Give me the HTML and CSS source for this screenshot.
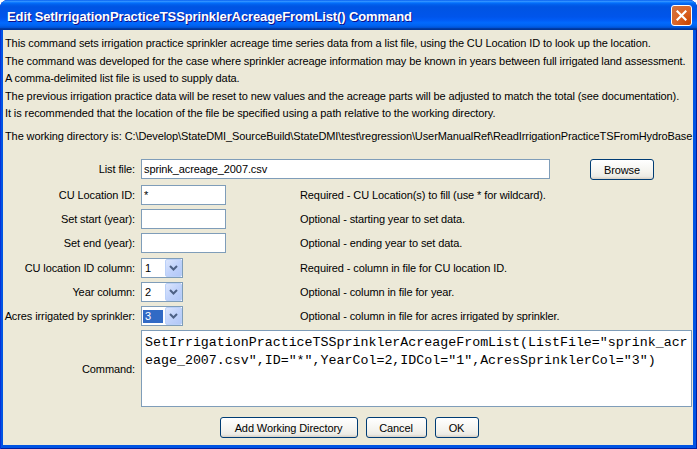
FILE: index.html
```html
<!DOCTYPE html>
<html>
<head>
<meta charset="utf-8">
<link rel="stylesheet" href="styles.css">
</head>
<body>
<div class="window">
  <div class="titlebar">
    <span class="title">Edit SetIrrigationPracticeTSSprinklerAcreageFromList() Command</span>
    <span class="close"><svg width="11" height="11" viewBox="0 0 11 11"><path d="M1.5 1.5 L9.5 9.5 M9.5 1.5 L1.5 9.5" stroke="#fff" stroke-width="2.2" stroke-linecap="square"/></svg></span>
  </div>
  <div class="client">
    <div class="desc">
      <div class="line">This command sets irrigation practice sprinkler acreage time series data from a list file, using the CU Location ID to look up the location.</div>
      <div class="line">The command was developed for the case where sprinkler acreage information may be known in years between full irrigated land assessment.</div>
      <div class="line">A comma-delimited list file is used to supply data.</div>
      <div class="line">The previous irrigation practice data will be reset to new values and the acreage parts will be adjusted to match the total (see documentation).</div>
      <div class="line">It is recommended that the location of the file be specified using a path relative to the working directory.</div>
      <div class="line workdir">The working directory is: C:\Develop\StateDMI_SourceBuild\StateDMI\test\regression\UserManualRef\ReadIrrigationPracticeTSFromHydroBase</div>
    </div>
    <div class="form">
      <div class="row row-file">
        <label class="lbl">List file:</label>
        <div class="filebox">
          <div class="field field-file">sprink_acreage_2007.csv</div>
          <div class="btn btn-browse">Browse</div>
        </div>
      </div>
      <div class="row spaced">
        <label class="lbl">CU Location ID:</label>
        <div class="field field-short">*</div>
        <div class="help">Required - CU Location(s) to fill (use * for wildcard).</div>
      </div>
      <div class="row">
        <label class="lbl">Set start (year):</label>
        <div class="field field-short"></div>
        <div class="help">Optional - starting year to set data.</div>
      </div>
      <div class="row">
        <label class="lbl">Set end (year):</label>
        <div class="field field-short"></div>
        <div class="help">Optional - ending year to set data.</div>
      </div>
      <div class="row spaced">
        <label class="lbl">CU location ID column:</label>
        <div class="combo"><span class="val">1</span><span class="arrow"><svg width="9" height="6" viewBox="0 0 9 6"><path d="M1 1 L4.5 4.5 L8 1" fill="none" stroke="#4d6185" stroke-width="2"/></svg></span></div>
        <div class="help">Required - column in file for CU location ID.</div>
      </div>
      <div class="row">
        <label class="lbl">Year column:</label>
        <div class="combo"><span class="val">2</span><span class="arrow"><svg width="9" height="6" viewBox="0 0 9 6"><path d="M1 1 L4.5 4.5 L8 1" fill="none" stroke="#4d6185" stroke-width="2"/></svg></span></div>
        <div class="help">Optional - column in file for year.</div>
      </div>
      <div class="row">
        <label class="lbl">Acres irrigated by sprinkler:</label>
        <div class="combo"><span class="val selected">3</span><span class="arrow"><svg width="9" height="6" viewBox="0 0 9 6"><path d="M1 1 L4.5 4.5 L8 1" fill="none" stroke="#4d6185" stroke-width="2"/></svg></span></div>
        <div class="help">Optional - column in file for acres irrigated by sprinkler.</div>
      </div>
      <div class="row row-cmd">
        <label class="lbl">Command:</label>
        <div class="cmd"><div>SetIrrigationPracticeTSSprinklerAcreageFromList(ListFile="sprink_acr</div><div>eage_2007.csv",ID="*",YearCol=2,IDCol="1",AcresSprinklerCol="3")</div></div>
      </div>
    </div>
    <div class="buttons">
      <div class="btn btn-add">Add Working Directory</div>
      <div class="btn btn-cancel">Cancel</div>
      <div class="btn btn-ok">OK</div>
    </div>
  </div>
</div>
</body>
</html>
```
FILE: styles.css
```css
html, body {
  margin: 0;
  padding: 0;
  background: #ffffff;
}
.window {
  width: 697px;
  height: 449px;
  display: flex;
  flex-direction: column;
  background: #0054e3;
  border-radius: 8px 8px 0 0;
  box-sizing: border-box;
  box-shadow: inset 1px 0 #0831d9, inset -1px 0 #001ea0, inset 0 -1px #001ea0;
  font-family: "Liberation Sans", Arial, sans-serif;
  font-size: 11px;
  letter-spacing: -0.1px;
  color: #000;
}
.titlebar {
  height: 30px;
  flex: none;
  display: flex;
  align-items: center;
  justify-content: space-between;
  padding: 0 5px 0 7px;
  border-radius: 8px 8px 0 0;
  background: linear-gradient(180deg, #0058ee 0%, #3593ff 4%, #288eff 6%, #127dff 8%, #036ffc 10%, #0262ee 14%, #0057e5 20%, #0054e3 24%, #0055eb 56%, #005bf5 66%, #026afe 76%, #0062ef 86%, #0052d6 92%, #0040ab 94%, #003092 100%);
}
.title {
  color: #fff;
  font-weight: bold;
  font-size: 13px;
  letter-spacing: -0.1px;
  text-shadow: 1px 1px #0f1089;
  padding-top: 3px;
}
.close {
  width: 19px;
  height: 19px;
  border: 1px solid #fff;
  border-radius: 3px;
  background: radial-gradient(circle at 90% 90%, #cc4600 0%, #dc6527 55%, #cd7546 100%);
  display: flex;
  align-items: center;
  justify-content: center;
  margin-top: 1px;
}
.client {
  flex: 1;
  margin: 0 4px 4px 3px;
  background: #ece9d8;
  padding: 5px 0 0 2px;
  display: flex;
  flex-direction: column;
}
.line {
  line-height: 17.5px;
  white-space: nowrap;
}
.workdir {
  margin-top: 5px;
}
.form {
  margin-top: 14px;
  margin-left: -2px;
  display: flex;
  flex-direction: column;
  gap: 4px;
  padding-right: 1px;
}
.row {
  display: grid;
  grid-template-columns: 132px 153px 1fr;
  column-gap: 6px;
  align-items: center;
}
.row.spaced {
  margin-top: 1px;
}
.lbl {
  text-align: right;
  white-space: nowrap;
}
.row-file {
  height: 21px;
  align-items: start;
}
.filebox {
  grid-column: 2 / 4;
  display: flex;
  align-items: flex-start;
}
.field {
  height: 20px;
  box-sizing: border-box;
  border: 1px solid #7f9db9;
  background: #fff;
  padding: 0 2px;
  line-height: 18px;
  white-space: nowrap;
}
.row-file .lbl {
  line-height: 20px;
}
.field-file {
  width: 409px;
}
.field-short {
  width: 85px;
}
.help {
  white-space: nowrap;
}
.btn {
  height: 21px;
  box-sizing: border-box;
  border: 1px solid #003c74;
  border-radius: 3px;
  background: linear-gradient(180deg, #ffffff 0%, #f4f3ee 60%, #ecebe5 86%, #d8d0c4 100%);
  display: flex;
  align-items: center;
  justify-content: center;
  white-space: nowrap;
}
.btn-browse {
  width: 64px;
  margin-left: 40px;
}
.combo {
  width: 42px;
  height: 20px;
  box-sizing: border-box;
  border: 1px solid #7f9db9;
  background: #fff;
  display: flex;
  align-items: center;
  justify-content: space-between;
}
.val {
  margin-left: 1px;
  width: 20px;
  height: 13px;
  line-height: 13px;
  padding-left: 2px;
  box-sizing: border-box;
}
.val.selected {
  background: #316ac5;
  color: #fff;
}
.arrow {
  width: 17px;
  height: 18px;
  box-sizing: border-box;
  border: 1px solid #bad0f8;
  border-radius: 2px;
  background: linear-gradient(135deg, #dce6fd 0%, #c1d3fb 50%, #b2c7f7 100%);
  display: flex;
  align-items: center;
  justify-content: center;
}
.row-cmd {
  height: 77px;
}
.cmd {
  grid-column: 2 / 4;
  height: 77px;
  box-sizing: border-box;
  border: 1px solid #7f9db9;
  background: #fff;
  padding: 3px 0 0 3px;
  font-family: "Liberation Mono", "Courier New", monospace;
  font-size: 13.3px;
  letter-spacing: 0;
  line-height: 18px;
  white-space: nowrap;
  overflow: hidden;
}
.buttons {
  margin-top: 10px;
  display: flex;
  justify-content: center;
  gap: 8px;
}
.btn-add {
  width: 138px;
}
.btn-cancel {
  width: 61px;
}
.btn-ok {
  width: 44px;
}
```
